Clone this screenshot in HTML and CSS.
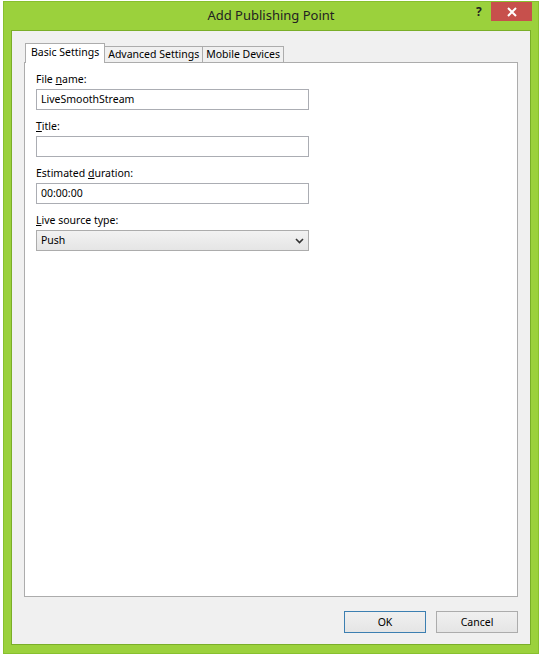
FILE: index.html
```html
<!DOCTYPE html>
<html lang="en">
<head>
    <meta charset="utf-8">
    <title>Add Publishing Point</title>
    <link rel="stylesheet" href="styles.css">
</head>
<body>
    <div class="window">
        <div class="titlebar">
            <span class="title">Add Publishing Point</span>
            <span class="help">?</span>
            <span class="close">
                <svg width="10" height="10" viewBox="0 0 10 10"><path d="M1 1L9 9M9 1L1 9" stroke="#fff" stroke-width="2"/></svg>
            </span>
        </div>
        <div class="client">
            <div class="tabs">
                <div class="tab active">Basic Settings</div>
                <div class="tab">Advanced Settings</div>
                <div class="tab">Mobile Devices</div>
            </div>
            <div class="panel">
                <div class="field">
                    <label>File <u>n</u>ame:</label>
                    <div class="input">LiveSmoothStream</div>
                </div>
                <div class="field">
                    <label><u>T</u>itle:</label>
                    <div class="input"></div>
                </div>
                <div class="field">
                    <label>Estimated <u>d</u>uration:</label>
                    <div class="input">00:00:00</div>
                </div>
                <div class="field">
                    <label><u>L</u>ive source type:</label>
                    <div class="select">
                        <span>Push</span>
                        <svg width="9" height="6" viewBox="0 0 9 6"><path d="M1 1L4.5 4.5L8 1" stroke="#333" stroke-width="1.6" fill="none"/></svg>
                    </div>
                </div>
            </div>
            <div class="buttons">
                <div class="btn default">OK</div>
                <div class="btn">Cancel</div>
            </div>
        </div>
    </div>
</body>
</html>
```

FILE: styles.css
```css
body { margin: 0; background: #fff; font-family: "Noto Sans", "Open Sans", sans-serif; font-size: 10.5px; color: #000; }
.window { margin: 1px 0 0 3px; width: 534px; height: 651px; background: #9bd13c; border: 1px solid #88c02e; display: flex; flex-direction: column; }
.titlebar { height: 28px; position: relative; display: flex; align-items: center; justify-content: center; }
.title { font-size: 13px; color: #222; margin-top: -2px; }
.help { position: absolute; left: 472px; top: 1px; font-weight: bold; font-size: 12px; color: #222; }
.close { position: absolute; left: 487px; top: 0; width: 41px; height: 19px; background: #c7504c; display: flex; align-items: center; justify-content: center; }
.client { margin: 0 7px 8px 7px; flex: 1; background: #f0f0f0; border: 1px solid #7aae28; padding: 13px 12px 11px 12px; display: flex; flex-direction: column; }
.tabs { display: flex; align-items: flex-end; height: 18px; padding-left: 1px; position: relative; z-index: 1; }
.tab { height: 15px; line-height: 14px; padding: 0 3px; border: 1px solid #acacac; border-bottom: none; background: #f0f0f0; margin-right: -1px; }
.tab.active { line-height: 16px; background: #fff; padding: 0 5px; margin-bottom: -1px; height: 19px; }
.panel { flex: 1; background: #fff; border: 1px solid #acacac; padding: 9px 11px; }
.field { margin-bottom: 9px; }
.field label { display: block; height: 15px; line-height: 15px; margin-bottom: 2px; }
.input { width: 263px; height: 19px; line-height: 19px; border: 1px solid #abadb3; padding: 0 4px; }
.select { width: 263px; height: 19px; line-height: 19px; border: 1px solid #acacac; padding: 0 4px; background: linear-gradient(#f2f2f2, #e5e5e5); display: flex; justify-content: space-between; align-items: center; }
.buttons { display: flex; justify-content: flex-end; gap: 10px; margin-top: 14px; }
.btn { width: 80px; height: 20px; line-height: 20px; text-align: center; border: 1px solid #acacac; background: linear-gradient(#f0f0f0, #e5e5e5); }
.btn.default { border-color: #3c7fb1; }
```
